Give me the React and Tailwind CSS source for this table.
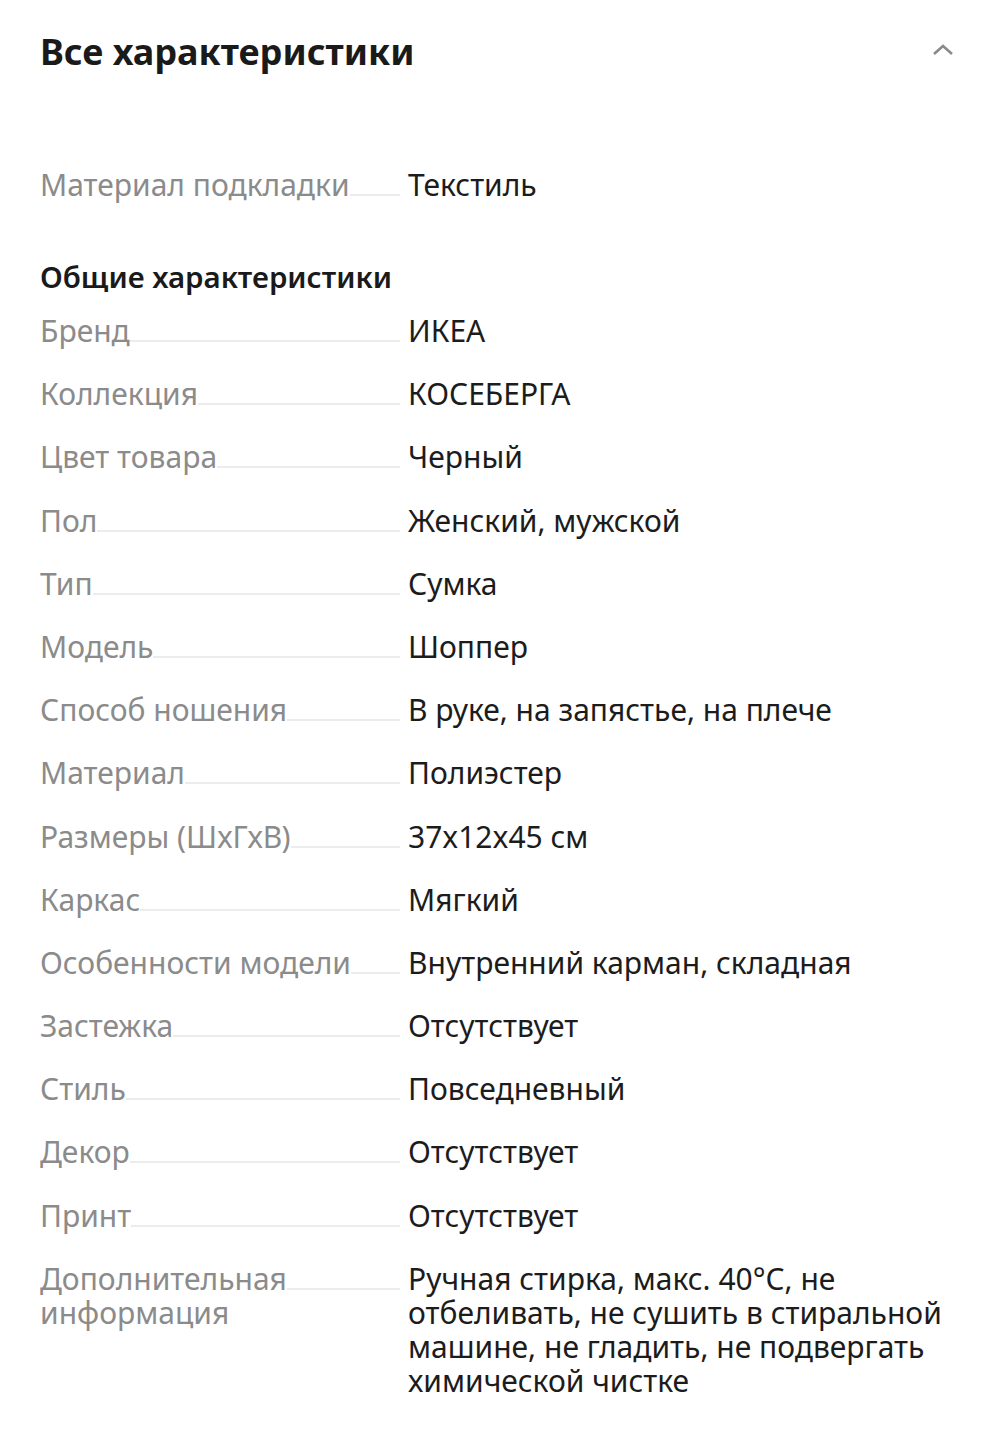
import React from "react";

const rows = [
  [["Бренд"], "ИКЕА"],
  [["Коллекция"], "КОСЕБЕРГА"],
  [["Цвет товара"], "Черный"],
  [["Пол"], "Женский, мужской"],
  [["Тип"], "Сумка"],
  [["Модель"], "Шоппер"],
  [["Способ ношения"], "В руке, на запястье, на плече"],
  [["Материал"], "Полиэстер"],
  [["Размеры (ШхГхВ)"], "37x12x45 см"],
  [["Каркас"], "Мягкий"],
  [["Особенности модели"], "Внутренний карман, складная"],
  [["Застежка"], "Отсутствует"],
  [["Стиль"], "Повседневный"],
  [["Декор"], "Отсутствует"],
  [["Принт"], "Отсутствует"],
  [["Дополнительная", "информация"], "Ручная стирка, макс. 40°C, не отбеливать, не сушить в стиральной машине, не гладить, не подвергать химической чистке"],
];

function Row({ label, value }) {
  return (
    <div className="grid grid-cols-[360px_1fr] gap-x-2 text-[30px] leading-[34px]">
      <div className="text-[#8b8b8b]">
        <div className="flex items-end">
          <span className="whitespace-nowrap">{label[0]}</span>
          <div className="flex-1 h-[2px] bg-[#ececea] mb-[6px]" />
        </div>
        {label.slice(1).map((l) => (
          <div key={l}>{l}</div>
        ))}
      </div>
      <div className="text-[#1c1c1c]">{value}</div>
    </div>
  );
}

export default function App() {
  return (
    <div
      className="bg-white w-[1000px] min-h-[1444px] px-10 pt-8 pb-10"
      style={{ fontFamily: '"Noto Sans", "Open Sans", sans-serif' }}
    >
      <div className="flex items-center justify-between">
        <h1 className="text-[36px] leading-[40px] font-bold text-[#1a1a1a]">Все характеристики</h1>
        <svg width="22" height="14" viewBox="0 0 22 14" className="mr-[6px] mt-[-4px]">
          <path d="M2 11 L11 3 L20 11" fill="none" stroke="#8a8a8a" strokeWidth="2.6" />
        </svg>
      </div>

      <div className="mt-[96px]">
        <Row label={["Материал подкладки"]} value="Текстиль" />
      </div>

      <h2 className="mt-[58px] text-[29.5px] leading-[34px] font-semibold text-[#1a1a1a]">Общие характеристики</h2>

      <div className="mt-[20px] flex flex-col gap-[29.2px]">
        {rows.map(([l, v]) => (
          <Row key={l[0]} label={l} value={v} />
        ))}
      </div>
    </div>
  );
}
